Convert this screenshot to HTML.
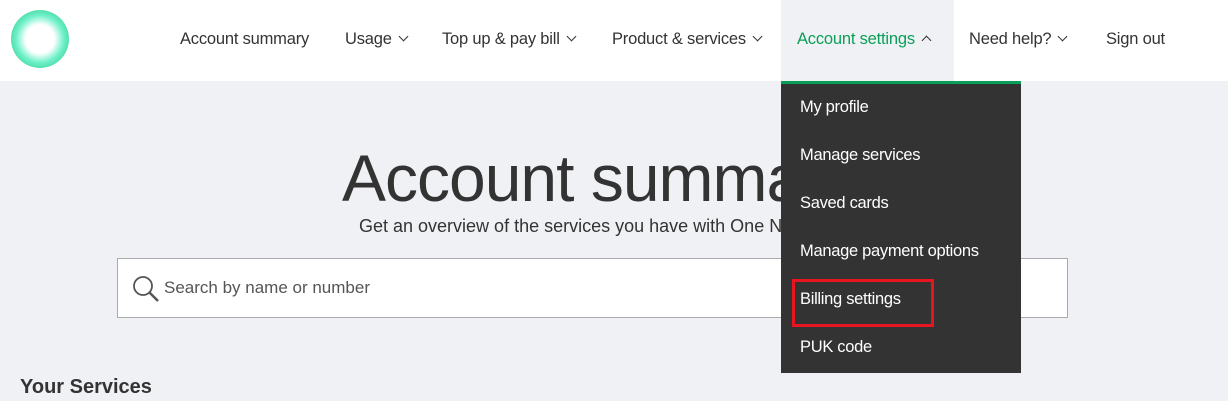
<!DOCTYPE html><html><head><style>
body{margin:0;width:1228px;height:401px;overflow:hidden;background:#f0f1f5;font-family:"Liberation Sans",sans-serif;position:relative}
.hdr{position:absolute;left:0;top:0;width:1228px;height:81px;background:#fff}
.logo{position:absolute;left:11px;top:10px;width:58px;height:58px;border-radius:50%;background:radial-gradient(circle,#fff 0,#fff 35%,#6ef0c8 58%,#1db872 100%)}
.nav{position:absolute;top:30px;font-size:16.5px;color:#333;white-space:nowrap;letter-spacing:-0.2px}
.chev{display:inline-block;width:6px;height:6px;border-right:1.5px solid #333;border-bottom:1.5px solid #333;transform:rotate(45deg);margin-left:8px;position:relative;top:-4px}
.act{position:absolute;left:781px;top:0;width:173px;height:81px;background:#f0f1f5}
.dd{position:absolute;left:781px;top:81px;width:240px;height:292px;background:#333;border-top:3px solid #0a9f58;box-sizing:border-box}
.dd div{position:absolute;left:19px;color:#fff;font-size:16.5px;letter-spacing:-0.3px}
h1{position:absolute;left:342px;top:140px;margin:0;font-weight:normal;font-size:66px;color:#333;letter-spacing:-1px}
.sub{position:absolute;left:359px;top:216px;font-size:18px;color:#333}
.sb{position:absolute;left:117px;top:258px;width:951px;height:60px;background:#fff;border:1px solid #aaa;box-sizing:border-box}
.sb span{position:absolute;left:46px;top:19px;font-size:17px;color:#555}
.ys{position:absolute;left:20px;top:376px;font-size:20px;font-weight:bold;color:#333}
</style></head><body>
<div class="hdr"><div class="logo"></div>
<div class="act"></div>
<div class="nav" style="left:180px">Account summary</div>
<div class="nav" style="left:345px">Usage<span class="chev"></span></div>
<div class="nav" style="left:442px">Top up &amp; pay bill<span class="chev"></span></div>
<div class="nav" style="left:612px">Product &amp; services<span class="chev"></span></div>
<div class="nav" style="left:797px;color:#0a9f58">Account settings<span class="chev" style="transform:rotate(225deg);top:0;border-color:#333"></span></div>
<div class="nav" style="left:969px">Need help?<span class="chev"></span></div>
<div class="nav" style="left:1106px">Sign out</div>
</div>
<h1>Account summary</h1>
<div class="sub">Get an overview of the services you have with One NZ</div>
<div class="sb"><svg style="position:absolute;left:14px;top:16px" width="28" height="28" viewBox="0 0 28 28"><circle cx="11" cy="11" r="9" fill="none" stroke="#555" stroke-width="1.8"/><path d="M17.5 17.5L26 26" stroke="#555" stroke-width="2.5"/></svg><span>Search by name or number</span></div>
<div class="ys">Your Services</div>
<div class="dd">
<div style="top:14px">My profile</div>
<div style="top:62px">Manage services</div>
<div style="top:110px">Saved cards</div>
<div style="top:158px">Manage payment options</div>
<div style="top:206px">Billing settings</div>
<div style="top:254px">PUK code</div>
</div>
<div style="position:absolute;left:792px;top:279px;width:142px;height:48px;border:3px solid #e8141f;box-sizing:border-box"></div>
</body></html>
